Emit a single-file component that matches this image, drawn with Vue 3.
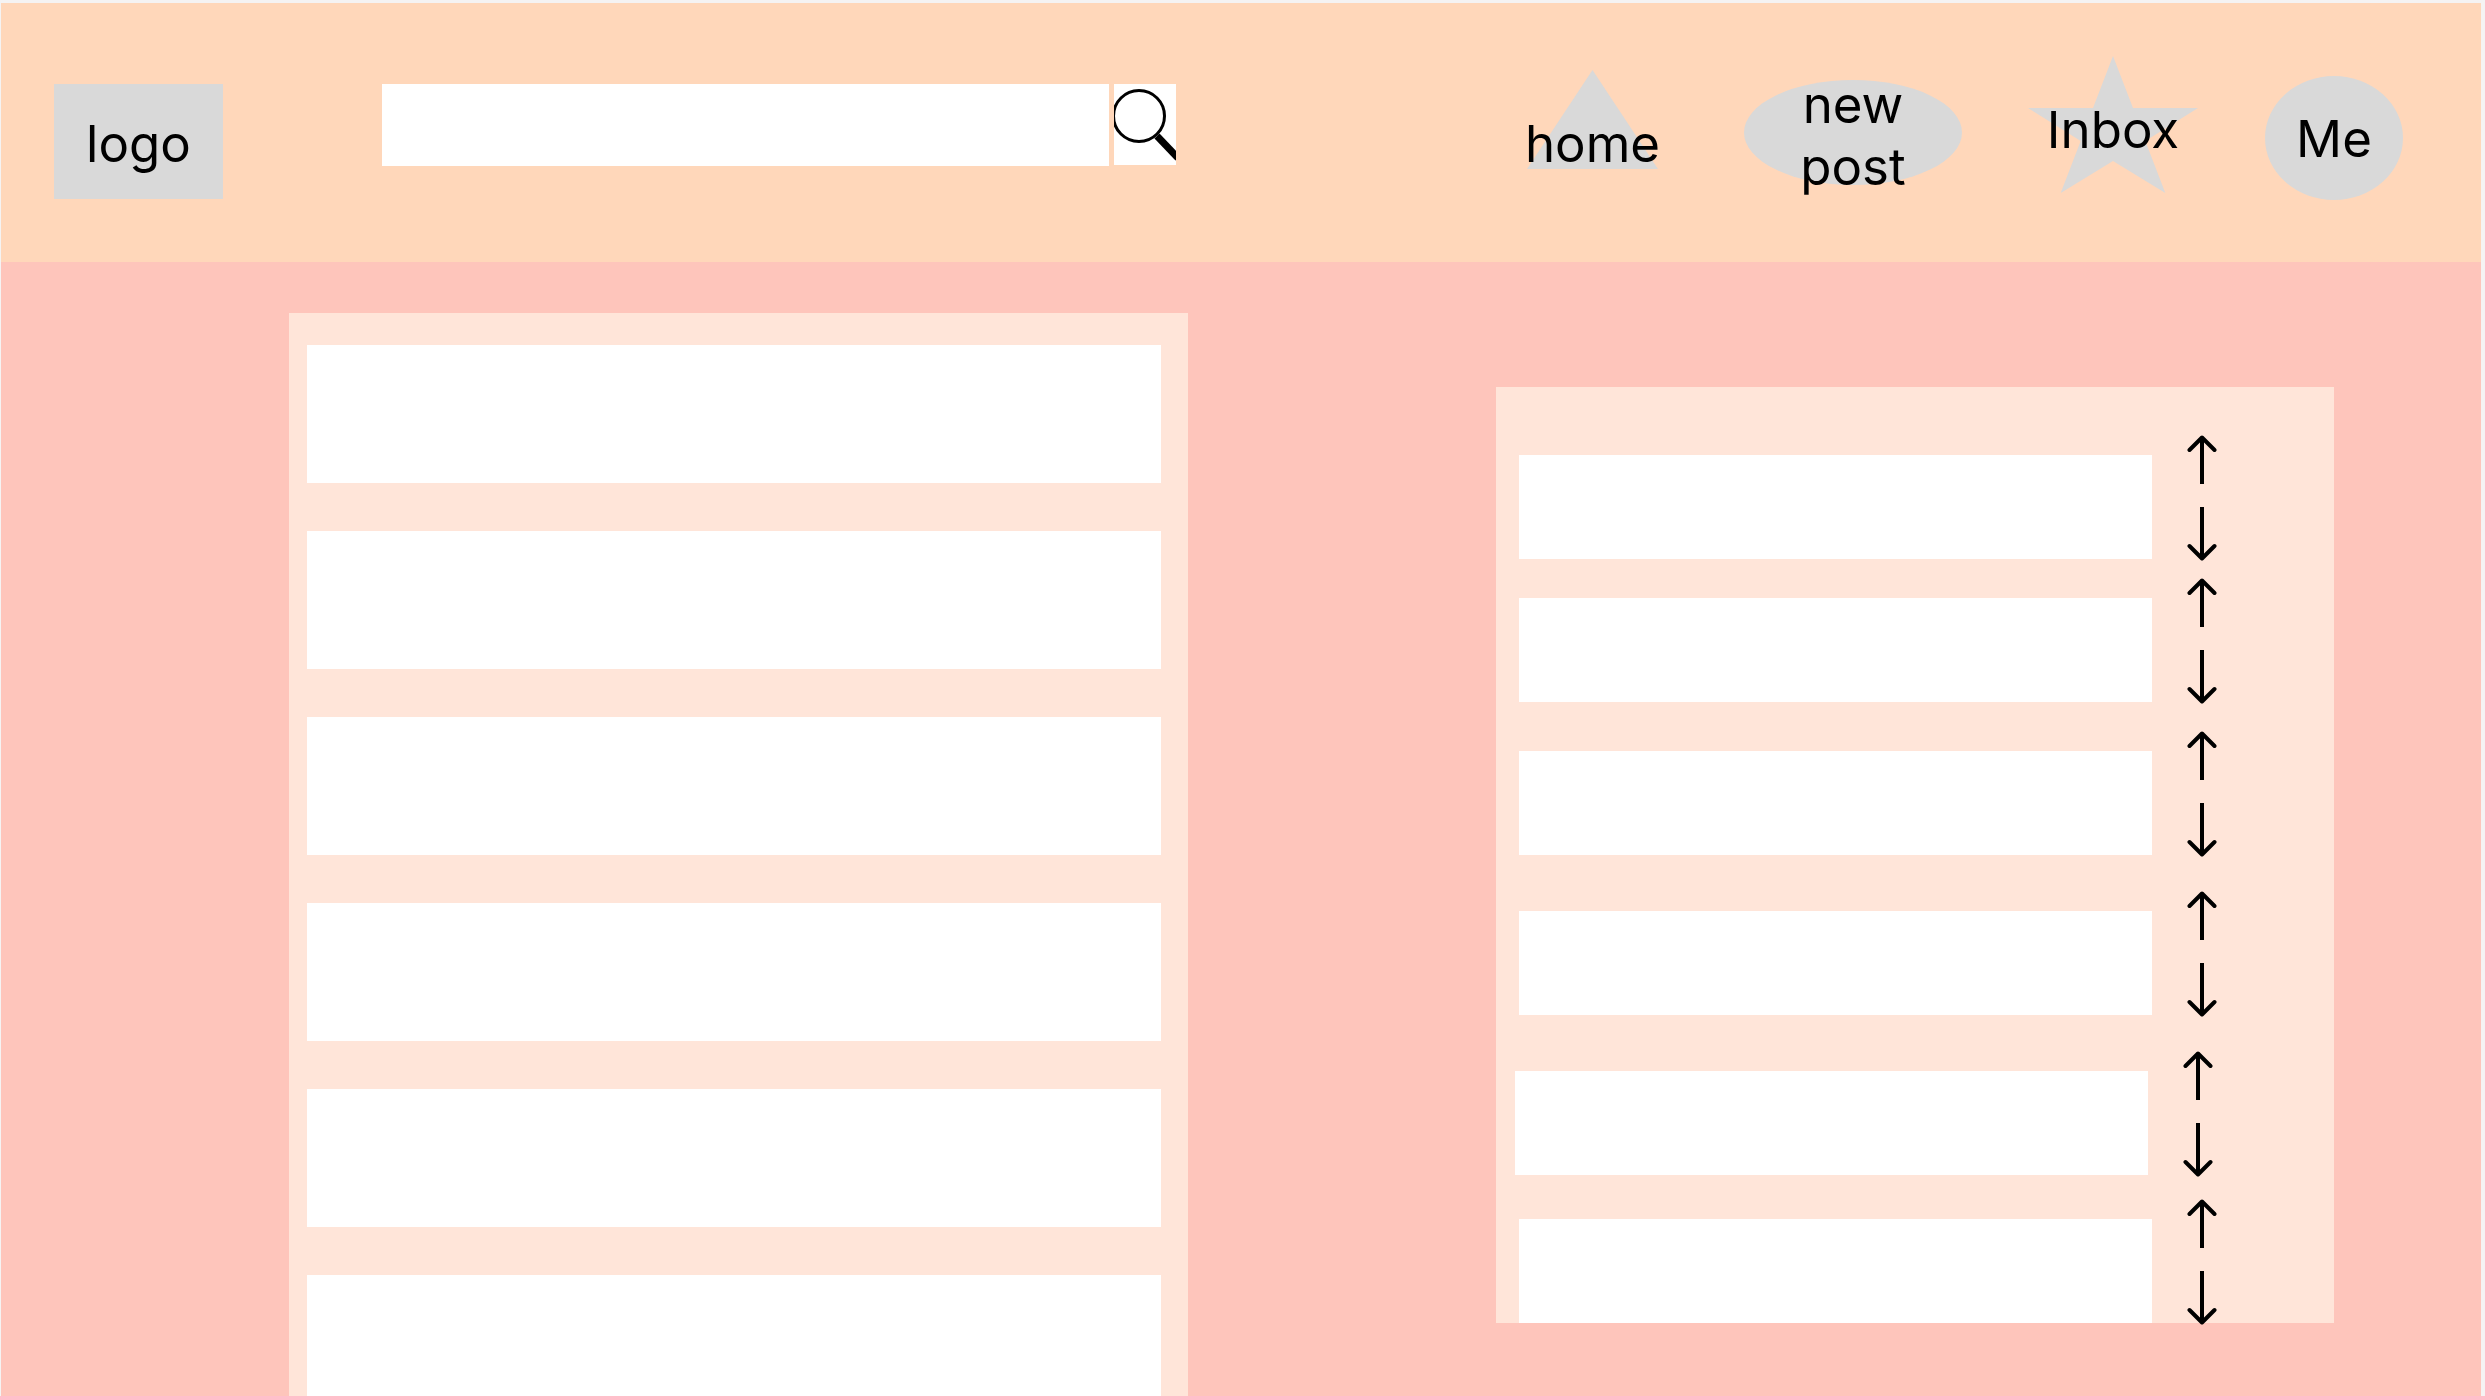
<script setup>
import { ref } from 'vue'

const query = ref('')
const posts = [1, 2, 3, 4, 5, 6]
const topics = [
  { id: 1, place: '' },
  { id: 2, place: 'gap-s' },
  { id: 3, place: 'gap-m' },
  { id: 4, place: 'gap-l' },
  { id: 5, place: 'gap-l outdent' },
  { id: 6, place: 'gap-last' },
]
</script>

<template>
  <div class="page">
    <header class="bar">
      <a class="logo" href="#">logo</a>

      <form class="search" role="search" @submit.prevent>
        <input v-model="query" class="field" type="search" aria-label="Search" />
        <button class="go" type="submit" aria-label="Search">
          <svg viewBox="0 0 62 81" width="62" height="81" aria-hidden="true">
            <circle cx="25" cy="32" r="25.5" fill="none" stroke="#000" stroke-width="3" />
            <path d="M43 52 L64 74" fill="none" stroke="#000" stroke-width="7" />
          </svg>
        </button>
      </form>

      <nav class="links" aria-label="Main">
        <a class="link home" href="#">
          <svg class="shape" viewBox="0 0 131 99" width="131" height="99" aria-hidden="true">
            <path d="M65.500 0 L131 99 H0 Z" />
          </svg>
          <span class="label">home</span>
        </a>
        <a class="link compose" href="#">
          <svg class="shape" viewBox="0 0 218 105" width="218" height="105" aria-hidden="true">
            <ellipse cx="109" cy="52.500" rx="109" ry="52.500" />
          </svg>
          <span class="label">new<br />post</span>
        </a>
        <a class="link inbox" href="#">
          <svg class="shape" viewBox="0 0 170 137" width="170" height="137" aria-hidden="true">
            <path d="M85 0 L105 52 H170 L117.300 85 L137.300 137 L85 105 L32.700 137 L52.700 85 L0 52 H65 Z" />
          </svg>
          <span class="label">Inbox</span>
        </a>
        <a class="link me" href="#">
          <svg class="shape" viewBox="0 0 138 124" width="138" height="124" aria-hidden="true">
            <ellipse cx="69" cy="62" rx="69" ry="62" />
          </svg>
          <span class="label">Me</span>
        </a>
      </nav>
    </header>

    <main class="content">
      <section class="feed" aria-label="Posts">
        <article v-for="post in posts" :key="post" class="post"></article>
      </section>

      <aside class="ranking" aria-label="Topics">
        <ul class="topics">
          <li v-for="topic in topics" :key="topic.id" class="topic" :class="topic.place">
            <div class="box"></div>
            <div class="votes">
              <button class="vote" type="button" aria-label="Move up">
                <svg viewBox="0 0 30 50" width="30" height="50" aria-hidden="true">
                  <path d="M15 49 V3" />
                  <path class="head" d="M2.500 15 L15 2.500 L27.500 15" />
                </svg>
              </button>
              <button class="vote" type="button" aria-label="Move down">
                <svg viewBox="0 0 30 54" width="30" height="54" aria-hidden="true">
                  <path d="M15 0 V51" />
                  <path class="head" d="M2.500 39 L15 51.500 L27.500 39" />
                </svg>
              </button>
            </div>
          </li>
        </ul>
      </aside>
    </main>
  </div>
</template>

<style>
body {
  margin: 0;
  background: #f5f3f3;
}
</style>

<style scoped>
.page {
  box-sizing: border-box;
  display: flex;
  flex-direction: column;
  min-height: 100vh;
  padding: 3px 4px 0 1px;
  font-family: Inter, "Liberation Sans", sans-serif;
  font-size: 51px;
  line-height: 62px;
  color: #000;
}

a {
  color: inherit;
  text-decoration: none;
}

button {
  padding: 0;
  border: 0;
  cursor: pointer;
}

svg {
  display: block;
}

.bar {
  display: flex;
  align-items: flex-start;
  box-sizing: border-box;
  height: 259px;
  padding: 0 78px 0 53px;
  background: #ffd7ba;
}

.logo {
  box-sizing: border-box;
  flex: none;
  width: 169px;
  height: 115px;
  margin-top: 81px;
  padding-top: 29px;
  background: #d9d9d9;
  text-align: center;
}

.search {
  display: flex;
  flex: 1;
  gap: 5px;
  min-width: 0;
  margin: 81px 351px 0 159px;
}

.field {
  box-sizing: border-box;
  flex: 1;
  min-width: 0;
  height: 82px;
  padding: 0 20px;
  border: 0;
  border-radius: 0;
  background: #fff;
  font: inherit;
  appearance: none;
}

.go {
  flex: none;
  width: 62px;
  height: 81px;
  overflow: hidden;
  background: #fff;
}

.links {
  display: flex;
  flex: none;
  align-items: flex-start;
}

.link {
  display: grid;
  justify-content: center;
  justify-items: center;
  align-items: start;
}

.shape,
.label {
  grid-area: 1 / 1;
}

.shape {
  fill: #d9d9d9;
}

.label {
  text-align: center;
  white-space: nowrap;
}

.home {
  width: 131px;
  margin-top: 67px;
}

.compose {
  margin: 77px 66px 0 86px;
}

.inbox {
  margin-top: 53px;
}

.me {
  margin: 73px 0 0 67px;
}

.home .label,
.inbox .label {
  padding-top: 43px;
}

.compose .label {
  margin-top: -6px;
}

.me .label {
  padding-top: 32px;
}

.content {
  display: grid;
  flex: 1;
  grid-template-columns: 288fr 899fr 308fr 838fr 147fr;
  background: #fec5bb;
}

.feed {
  display: flex;
  flex-direction: column;
  grid-column: 2;
  gap: 48px;
  margin-top: 51px;
  padding: 32px 27px 0 18px;
  background: #ffe5d9;
}

.post {
  flex: none;
  height: 138px;
  background: #fff;
}

/* The last post runs on to the foot of the window. */
.post:last-child {
  flex: 1 0 100px;
  height: auto;
}

.ranking {
  grid-column: 4;
  align-self: start;
  margin-top: 125px;
  padding: 68px 117px 0 23px;
  background: #ffe5d9;
}

.topics {
  margin: 0;
  padding: 0;
  list-style: none;
}

.topic {
  display: flex;
  gap: 35px;
  height: 104px;
}

.gap-s {
  margin-top: 39px;
}

.gap-m {
  margin-top: 49px;
}

.gap-l {
  margin-top: 56px;
}

.gap-last {
  margin-top: 44px;
}

.outdent {
  margin-left: -4px;
  margin-right: 4px;
}

.box {
  flex: 1;
  background: #fff;
}

.votes {
  display: flex;
  flex: none;
  flex-direction: column;
  gap: 22px;
  margin-top: -20px;
}

.vote {
  flex: none;
  background: none;
}

.vote path {
  fill: none;
  stroke: #000;
  stroke-width: 4;
}

.vote .head {
  stroke-linecap: round;
  stroke-linejoin: round;
}
</style>
